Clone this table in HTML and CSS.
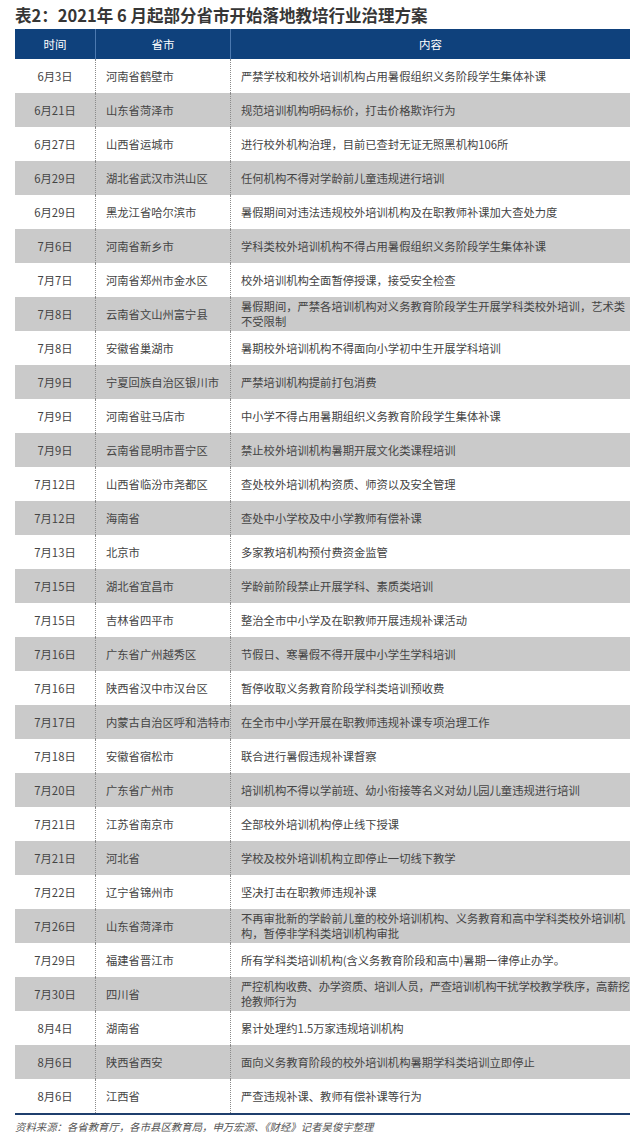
FILE: index.html
```html
<!DOCTYPE html>
<html lang="zh-CN">
<head>
<meta charset="utf-8">
<link rel="stylesheet" href="styles.css">
</head>
<body>
<div class="page">
  <h1 class="title">表2：2021年 6 月起部分省市开始落地教培行业治理方案</h1>
  <div class="table">
    <div class="row head">
      <div class="c date">时间</div>
      <div class="c prov">省市</div>
      <div class="c cont">内容</div>
    </div>
    <div class="row"><div class="c date">6月3日</div><div class="c prov">河南省鹤壁市</div><div class="c cont">严禁学校和校外培训机构占用暑假组织义务阶段学生集体补课</div></div>
    <div class="row"><div class="c date">6月21日</div><div class="c prov">山东省菏泽市</div><div class="c cont">规范培训机构明码标价，打击价格欺诈行为</div></div>
    <div class="row"><div class="c date">6月27日</div><div class="c prov">山西省运城市</div><div class="c cont">进行校外机构治理，目前已查封无证无照黑机构106所</div></div>
    <div class="row"><div class="c date">6月29日</div><div class="c prov">湖北省武汉市洪山区</div><div class="c cont">任何机构不得对学龄前儿童违规进行培训</div></div>
    <div class="row"><div class="c date">6月29日</div><div class="c prov">黑龙江省哈尔滨市</div><div class="c cont">暑假期间对违法违规校外培训机构及在职教师补课加大查处力度</div></div>
    <div class="row"><div class="c date">7月6日</div><div class="c prov">河南省新乡市</div><div class="c cont">学科类校外培训机构不得占用暑假组织义务阶段学生集体补课</div></div>
    <div class="row"><div class="c date">7月7日</div><div class="c prov">河南省郑州市金水区</div><div class="c cont">校外培训机构全面暂停授课，接受安全检查</div></div>
    <div class="row"><div class="c date">7月8日</div><div class="c prov">云南省文山州富宁县</div><div class="c cont">暑假期间，严禁各培训机构对义务教育阶段学生开展学科类校外培训，艺术类<br>不受限制</div></div>
    <div class="row"><div class="c date">7月8日</div><div class="c prov">安徽省巢湖市</div><div class="c cont">暑期校外培训机构不得面向小学初中生开展学科培训</div></div>
    <div class="row"><div class="c date">7月9日</div><div class="c prov">宁夏回族自治区银川市</div><div class="c cont">严禁培训机构提前打包消费</div></div>
    <div class="row"><div class="c date">7月9日</div><div class="c prov">河南省驻马店市</div><div class="c cont">中小学不得占用暑期组织义务教育阶段学生集体补课</div></div>
    <div class="row"><div class="c date">7月9日</div><div class="c prov">云南省昆明市晋宁区</div><div class="c cont">禁止校外培训机构暑期开展文化类课程培训</div></div>
    <div class="row"><div class="c date">7月12日</div><div class="c prov">山西省临汾市尧都区</div><div class="c cont">查处校外培训机构资质、师资以及安全管理</div></div>
    <div class="row"><div class="c date">7月12日</div><div class="c prov">海南省</div><div class="c cont">查处中小学校及中小学教师有偿补课</div></div>
    <div class="row"><div class="c date">7月13日</div><div class="c prov">北京市</div><div class="c cont">多家教培机构预付费资金监管</div></div>
    <div class="row"><div class="c date">7月15日</div><div class="c prov">湖北省宜昌市</div><div class="c cont">学龄前阶段禁止开展学科、素质类培训</div></div>
    <div class="row"><div class="c date">7月15日</div><div class="c prov">吉林省四平市</div><div class="c cont">整治全市中小学及在职教师开展违规补课活动</div></div>
    <div class="row"><div class="c date">7月16日</div><div class="c prov">广东省广州越秀区</div><div class="c cont">节假日、寒暑假不得开展中小学生学科培训</div></div>
    <div class="row"><div class="c date">7月16日</div><div class="c prov">陕西省汉中市汉台区</div><div class="c cont">暂停收取义务教育阶段学科类培训预收费</div></div>
    <div class="row"><div class="c date">7月17日</div><div class="c prov">内蒙古自治区呼和浩特市</div><div class="c cont">在全市中小学开展在职教师违规补课专项治理工作</div></div>
    <div class="row"><div class="c date">7月18日</div><div class="c prov">安徽省宿松市</div><div class="c cont">联合进行暑假违规补课督察</div></div>
    <div class="row"><div class="c date">7月20日</div><div class="c prov">广东省广州市</div><div class="c cont">培训机构不得以学前班、幼小衔接等名义对幼儿园儿童违规进行培训</div></div>
    <div class="row"><div class="c date">7月21日</div><div class="c prov">江苏省南京市</div><div class="c cont">全部校外培训机构停止线下授课</div></div>
    <div class="row"><div class="c date">7月21日</div><div class="c prov">河北省</div><div class="c cont">学校及校外培训机构立即停止一切线下教学</div></div>
    <div class="row"><div class="c date">7月22日</div><div class="c prov">辽宁省锦州市</div><div class="c cont">坚决打击在职教师违规补课</div></div>
    <div class="row"><div class="c date">7月26日</div><div class="c prov">山东省菏泽市</div><div class="c cont">不再审批新的学龄前儿童的校外培训机构、义务教育和高中学科类校外培训机<br>构，暂停非学科类培训机构审批</div></div>
    <div class="row"><div class="c date">7月29日</div><div class="c prov">福建省晋江市</div><div class="c cont">所有学科类培训机构(含义务教育阶段和高中)暑期一律停止办学。</div></div>
    <div class="row"><div class="c date">7月30日</div><div class="c prov">四川省</div><div class="c cont tight">严控机构收费、办学资质、培训人员，严查培训机构干扰学校教学秩序，高薪挖<br>抢教师行为</div></div>
    <div class="row"><div class="c date">8月4日</div><div class="c prov">湖南省</div><div class="c cont">累计处理约1.5万家违规培训机构</div></div>
    <div class="row"><div class="c date">8月6日</div><div class="c prov">陕西省西安</div><div class="c cont">面向义务教育阶段的校外培训机构暑期学科类培训立即停止</div></div>
    <div class="row"><div class="c date">8月6日</div><div class="c prov">江西省</div><div class="c cont">严查违规补课、教师有偿补课等行为</div></div>
  </div>
  <p class="source">资料来源：各省教育厅，各市县区教育局，申万宏源、《财经》记者吴俊宇整理</p>
</div>
</body>
</html>
```

FILE: styles.css
```css
html, body {
  margin: 0;
  padding: 0;
  background: #ffffff;
}

.page {
  width: 615px;
  padding-left: 15px;
  font-family: "Noto Sans CJK SC", "Noto Sans", sans-serif;
  color: #444;
}

.title {
  margin: 0;
  height: 29px;
  box-sizing: border-box;
  padding-top: 3px;
  font-size: 16.5px;
  line-height: 24px;
  font-weight: 700;
  color: #363636;
  white-space: nowrap;
}

.table {
  border-bottom: 2px solid #1f3f6d;
}

.row {
  display: grid;
  grid-template-columns: 80px 135px 400px;
  height: 34px;
}

.row:nth-child(odd) {
  background: #cacaca;
}

.row.head {
  height: 30px;
  background: #0f417c;
  color: #ffffff;
}

.c {
  display: flex;
  align-items: center;
  font-size: 11.3px;
  line-height: 15px;
  white-space: nowrap;
}

.date {
  justify-content: center;
}

.prov,
.cont {
  padding-left: 10px;
  border-left: 1px dotted #8a8a8a;
}

.cont.tight {
  letter-spacing: -0.2px;
}

.head .c {
  justify-content: center;
  padding-left: 0;
  font-size: 11.5px;
  border-left: 1px solid #4c79b0;
}

.head .date {
  border-left: none;
}

.source {
  margin: 4px 0 0;
  font-size: 10.4px;
  line-height: 16px;
  font-style: italic;
  color: #555;
  white-space: nowrap;
}
```
